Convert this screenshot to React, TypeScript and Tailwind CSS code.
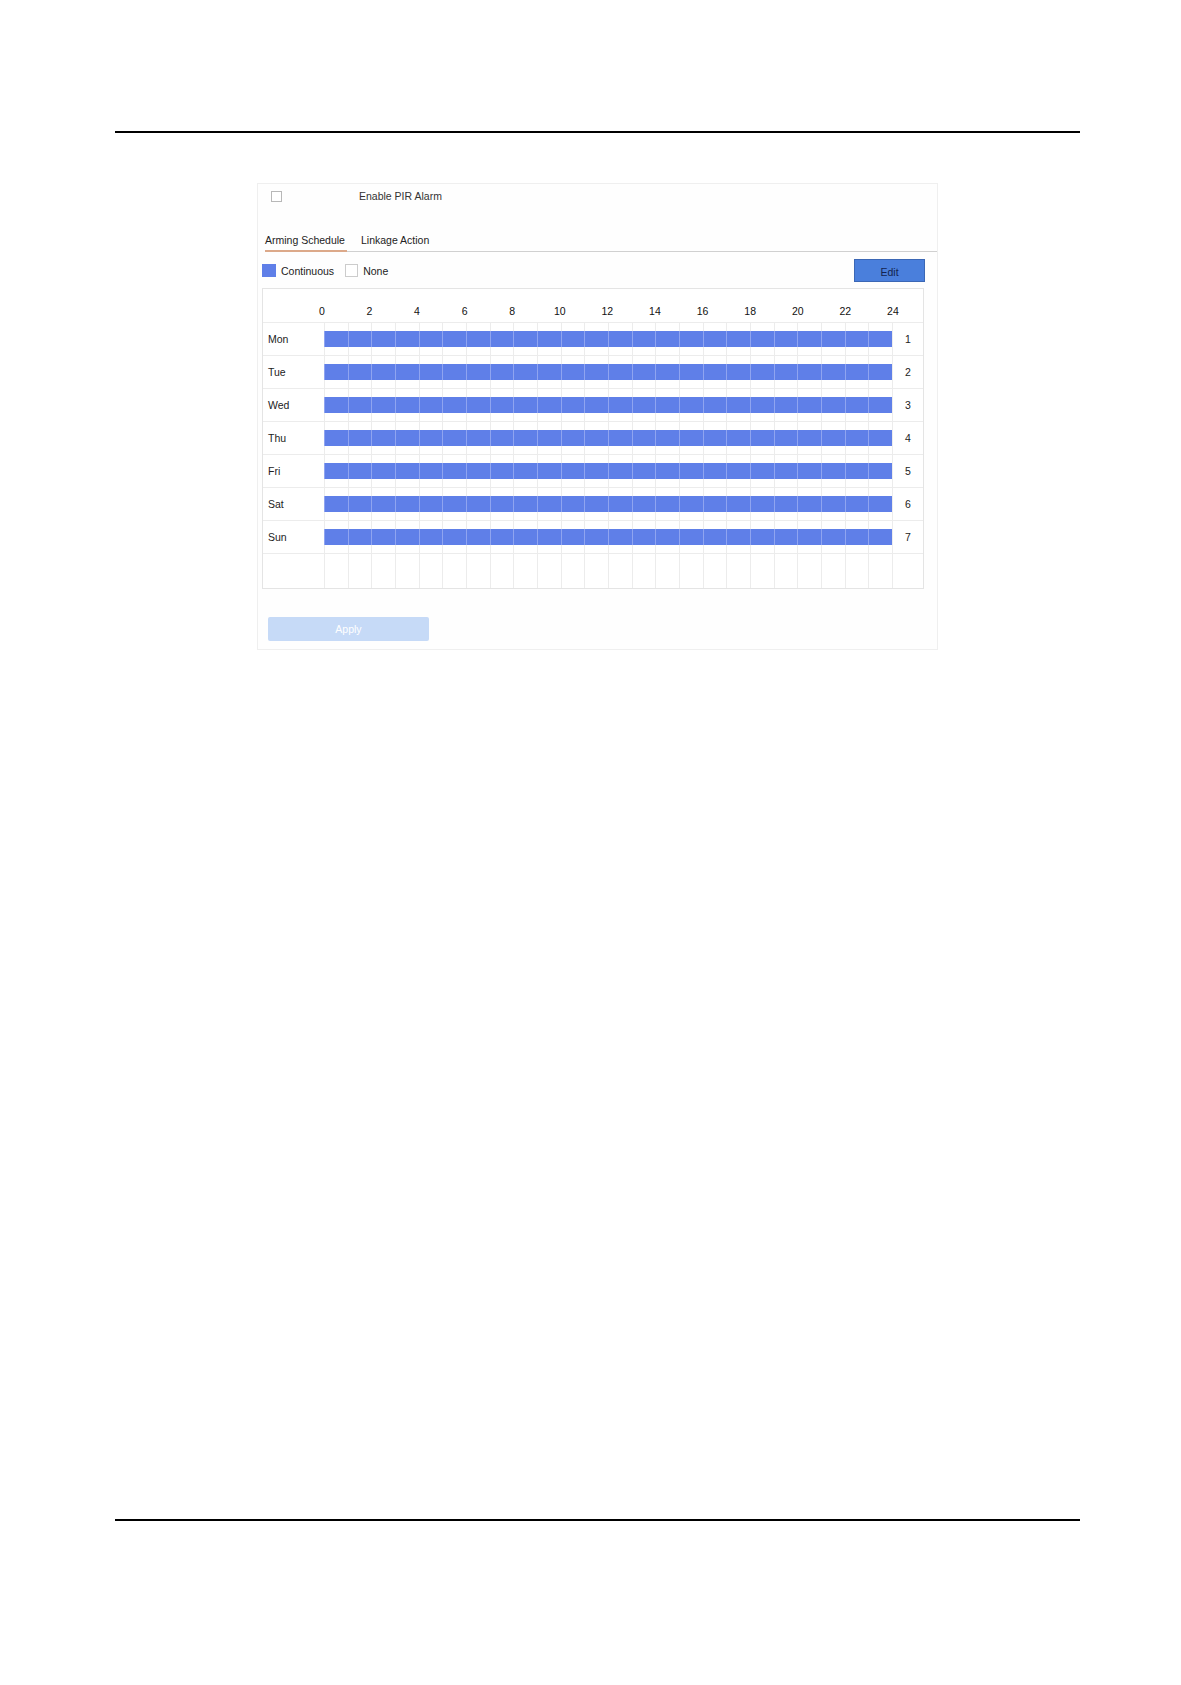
import React from "react";

const days = ["Mon", "Tue", "Wed", "Thu", "Fri", "Sat", "Sun"];
const hours = [0, 2, 4, 6, 8, 10, 12, 14, 16, 18, 20, 22, 24];
const cells = Array.from({ length: 24 }, (_, i) => i);

function HourCells({ filled }: { filled: boolean }) {
  return (
    <div className="grid grid-cols-24 w-[568px] h-full">
      {cells.map((c) => (
        <div key={c} className="border-l border-[#ececec] flex items-center h-full">
          {filled && (
            <div className="h-[16px] w-[calc(100%+1px)] -ml-px bg-[#5f7fe8] border-l border-[#8fa4f0]" />
          )}
        </div>
      ))}
    </div>
  );
}

export default function App() {
  return (
    <div className="w-[1181px] h-[1685px] bg-white font-['Liberation_Sans',Arial,sans-serif] text-[10.5px] text-[#222]">
      <div className="pt-[131px] pl-[115px]">
        <div className="w-[965px] h-[2px] bg-black" />
      </div>

      <div className="ml-[257px] mt-[50px] w-[681px] h-[467px] border border-[#efefef] bg-[#fefefe] flex flex-col">
        {/* Enable row */}
        <div className="h-[24px] flex items-center pl-[13px]">
          <div className="w-[11px] h-[11px] border border-[#b8b8b8] bg-white" />
          <span className="ml-[77px] text-[#333] leading-[14px]">Enable PIR Alarm</span>
        </div>

        {/* Tabs */}
        <div className="ml-[7px] h-[44px] flex items-end border-b border-[#d0d0d0]">
          <div className="leading-[14px] pb-[3px] pr-[2px] border-b-2 border-[#dca98a] -mb-px text-[#222]">
            Arming Schedule
          </div>
          <div className="ml-[14px] leading-[14px] pb-[3px] border-b-2 border-transparent -mb-px text-[#222]">
            Linkage Action
          </div>
        </div>

        {/* Legend + Edit */}
        <div className="mt-[7px] h-[23px] flex items-center pl-[4px] pr-[12px]">
          <div className="w-[14px] h-[13px] bg-[#5f7fe8]" />
          <span className="ml-[5px] leading-[14px]">Continuous</span>
          <div className="ml-[11px] w-[13px] h-[13px] border border-[#cccccc] bg-white" />
          <span className="ml-[5px] leading-[14px]">None</span>
          <div className="flex-1" />
          <button className="w-[71px] h-[23px] bg-[#4a7fdc] border border-[#3b67b5] text-[#14244f] text-[10.5px] leading-[14px] flex items-center justify-center pt-[2px]">
            Edit
          </button>
        </div>

        {/* Schedule grid */}
        <div className="ml-[4px] mt-[6px] w-[662px] border border-[#e4e4e4] bg-white flex flex-col">
          {/* header */}
          <div className="h-[34px] flex border-b border-[#ececec]">
            <div className="w-[61px]" />
            <div className="w-[568px] flex items-end pb-[4px]">
              <div className="-ml-[26px] flex">
                {hours.map((h) => (
                  <div key={h} className="w-[47.6px] text-center leading-[14px] text-[#111]">
                    {h}
                  </div>
                ))}
              </div>
            </div>
            <div className="w-[31px]" />
          </div>

          {days.map((d, i) => (
            <div key={d} className="h-[33px] flex border-b border-[#ececec]">
              <div className="w-[61px] pl-[5px] flex items-center leading-[14px]">{d}</div>
              <HourCells filled />
              <div className="w-[31px] border-l border-[#ececec] flex items-center justify-center leading-[14px]">
                {i + 1}
              </div>
            </div>
          ))}

          <div className="h-[34px] flex">
            <div className="w-[61px]" />
            <HourCells filled={false} />
            <div className="w-[31px] border-l border-[#ececec]" />
          </div>
        </div>

        {/* Apply */}
        <div className="ml-[10px] mt-[28px]">
          <button className="w-[161px] h-[24px] rounded-[2px] bg-[#c6daf7] text-white text-[10.5px] leading-[14px] flex items-center justify-center">
            Apply
          </button>
        </div>
      </div>

      <div className="mt-[869px] pl-[115px]">
        <div className="w-[965px] h-[2px] bg-black" />
      </div>
    </div>
  );
}
